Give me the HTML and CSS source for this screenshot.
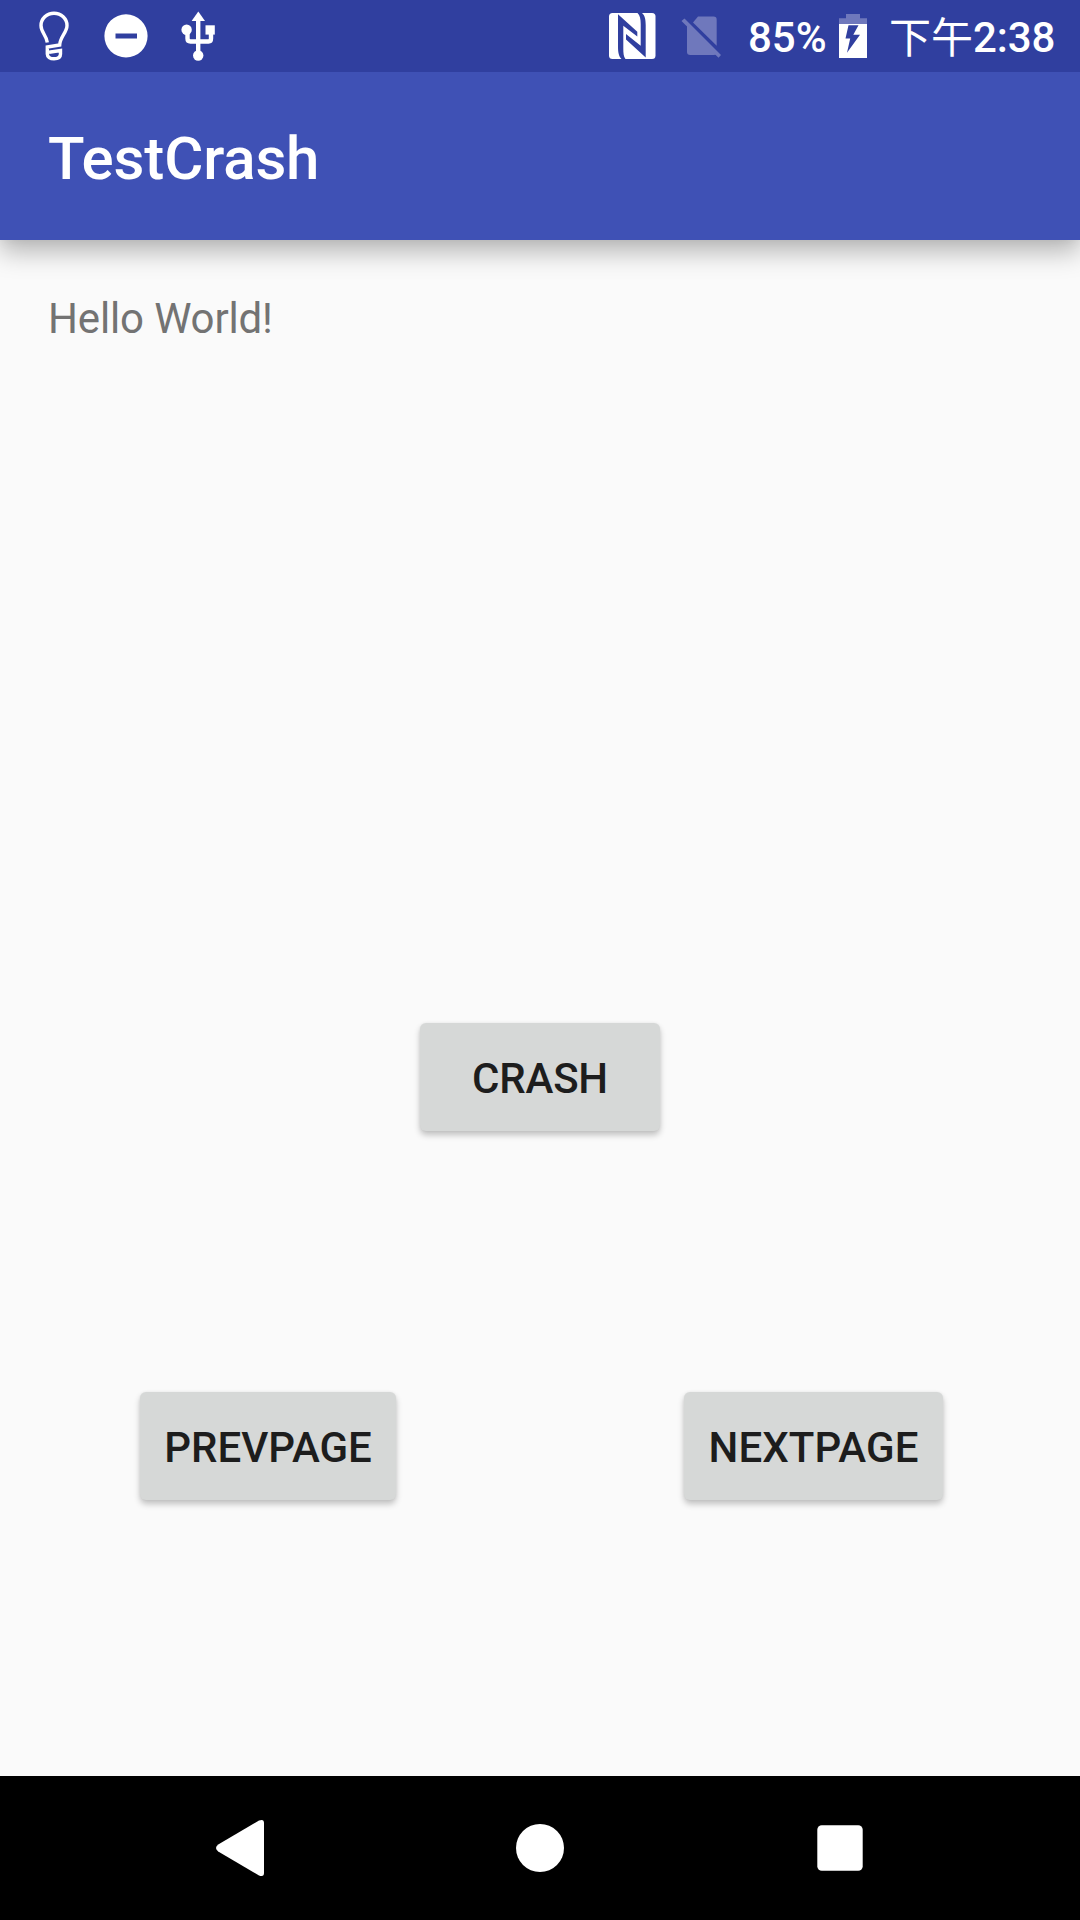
FILE: index.html
```html
<!DOCTYPE html>
<html lang="zh">
<head>
<meta charset="utf-8">
<title>TestCrash</title>
<link rel="stylesheet" href="styles.css">
</head>
<body>
<div class="screen">
  <header class="status-bar">
    <div class="notifications">
      <svg class="status-icon" viewBox="18 0 72 72" fill="none" stroke="#fff" stroke-width="3.4">
        <path d="M47.300 42.500C46.500 35 41 32.500 41 25.500A13 12.300 0 0 1 67 25.500C67 32.500 60 37 59.700 45L47.300 47V54C47.300 57 50 58.800 54 58.800S60.500 57 60.500 54V50.500L49 52.300"/>
      </svg>
      <svg class="status-icon" viewBox="90 0 72 72">
        <path fill="#fff" fill-rule="evenodd" d="M126 14.300a21.600 21.600 0 1 0 0 43.200a21.600 21.600 0 1 0 0-43.200zM115.500 33.500h21.500v5h-21.500z"/>
      </svg>
      <svg class="status-icon" viewBox="162 0 72 72">
        <path fill="#fff" d="M198.300 11.500l6.700 9.500h-13.400z"/>
        <path fill="none" stroke="#fff" stroke-width="4.400" d="M198.200 20v35M187.500 31v7.500q0 3 3 3h18q2.500 0 2.500-3v-7"/>
        <circle fill="#fff" cx="186.600" cy="29.800" r="5.200"/>
        <path fill="#fff" d="M205.500 25.300h9.300v9.300h-9.300z"/>
        <circle fill="#fff" cx="198.200" cy="55.500" r="5.200"/>
      </svg>
    </div>
    <div class="system">
      <svg class="status-icon" viewBox="596 0 72 72">
        <rect x="609" y="13" width="46.500" height="46" rx="3.500" fill="#fff"/>
        <path fill="#303f9f" d="M618 14.300L637.300 31.700V36.500L623.300 25.700V48C623.300 53 623.500 56.500 625.500 59H621.500C619 56.500 618 53 618 47z"/>
        <path fill="#303f9f" d="M645.700 57.500L626 39.500V34L640.700 45.700V24C640.700 19 640 15.500 637.500 13H642C644.800 15.500 645.700 19 645.700 25z"/>
      </svg>
      <svg class="status-icon sim" viewBox="665 0 72 72" fill="#6f78bc">
        <path d="M698 16.500h15.500a3.200 3.200 0 0 1 3.200 3.200v26L693 22.500z"/>
        <path d="M687 23.500L717 53.500Q716 55 713.500 55H690.200a3.200 3.200 0 0 1-3.200-3.200z"/>
        <path d="M684.500 18.500L721 55L718.500 57.800L681.500 21z"/>
      </svg>
      <span class="battery-level">85%</span>
      <svg class="battery" viewBox="839 0 28 72">
        <path fill="#6f78bc" d="M846 14h14v4.300h7v6h-28v-6h7z"/>
        <path fill="#fff" d="M839 24h28v34h-28z"/>
        <path fill="#303f9f" d="M848.500 25.200h10l-5.200 9.500h6.700l-13 18 3.200-14.200h-4.700z"/>
      </svg>
      <span class="clock"><span class="meridiem">下午</span><span>2:38</span></span>
    </div>
  </header>
  <div class="app-bar"><h1 class="title">TestCrash</h1></div>
  <main class="content">
    <p class="greeting">Hello World!</p>
    <button class="button crash">CRASH</button>
    <div class="pager">
      <button class="button prev">PREVPAGE</button>
      <button class="button next">NEXTPAGE</button>
    </div>
  </main>
  <nav class="nav-bar">
    <svg class="nav-icon" viewBox="0 0 60 60"><path d="M8.200 26.500L49 2.600Q54 .500 54 5V55Q54 59.500 49 57.400L8.200 33.500Q3.800 30 8.200 26.500z"/></svg>
    <svg class="nav-icon" viewBox="0 0 60 60"><circle cx="30" cy="30" r="24"/></svg>
    <svg class="nav-icon" viewBox="0 0 60 60"><rect x="7.300" y="7.300" width="45.400" height="45.400" rx="4.500"/></svg>
  </nav>
</div>
</body>
</html>
```
FILE: styles.css
```css
* { box-sizing: border-box; }
body { margin: 0; font-family: Roboto, "Noto Sans CJK SC", sans-serif; }
.screen {
  display: flex;
  flex-direction: column;
  width: 1080px;
  height: 1920px;
  background: #fafafa;
}
.status-bar {
  position: relative;
  z-index: 1;
  display: flex;
  justify-content: space-between;
  height: 72px;
  padding: 0 24px 0 18px;
  background: #303f9f;
  color: #fff;
  font-size: 42px;
  font-weight: 500;
  line-height: 76px;
  white-space: nowrap;
}
.notifications, .system { display: flex; }
.status-icon { width: 72px; height: 72px; }
.sim { margin-left: -3px; }
.battery-level { width: 78px; margin-left: 11px; }
.battery { width: 28px; height: 72px; margin-left: 13px; }
.clock { display: flex; width: 167px; margin-left: 22px; letter-spacing: -.1px; }
.meridiem {
  font-family: "Noto Sans CJK SC", sans-serif;
  font-weight: 400;
  line-height: 70px;
  letter-spacing: 0;
}
.app-bar {
  height: 168px;
  padding: 52px 48px 0;
  background: #3f51b5;
  box-shadow: 0 12px 24px rgba(0, 0, 0, .27), 0 0 12px rgba(0, 0, 0, .06);
}
.title {
  margin: 0;
  color: #fff;
  font-size: 60px;
  font-weight: 500;
  line-height: 70px;
  letter-spacing: -.15px;
}
.content {
  display: flex;
  flex: 1;
  flex-direction: column;
  align-items: center;
  padding: 49px 48px;
}
.greeting {
  align-self: flex-start;
  margin: 0;
  color: #737373;
  font-size: 42px;
  line-height: 60px;
  letter-spacing: -.15px;
}
.button {
  height: 108px;
  padding: 3px 0 0;
  border: 0;
  border-radius: 6px;
  background: #d6d8d7;
  box-shadow: 0 4px 6px rgba(0, 0, 0, .23), 0 0 3px rgba(0, 0, 0, .06);
  color: #1d1d1d;
  font: 500 42px/105px Roboto, sans-serif;
}
.crash { width: 240px; margin-top: 674px; letter-spacing: -.2px; }
.pager {
  display: flex;
  justify-content: space-between;
  align-self: stretch;
  margin-top: 261px;
  padding: 0 89px 0 92px;
}
.prev { width: 256px; }
.next { width: 259px; letter-spacing: .1px; }
.nav-bar {
  display: flex;
  align-items: center;
  justify-content: space-between;
  height: 144px;
  padding: 0 210px;
  background: #000;
}
.nav-icon { width: 60px; height: 60px; fill: #fff; }
```
